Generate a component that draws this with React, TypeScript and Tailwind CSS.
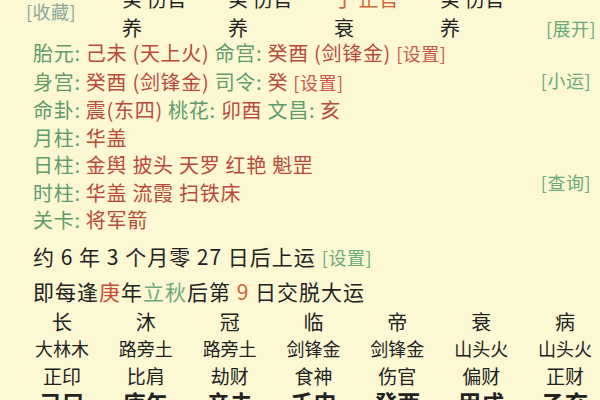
const label = "text-[#5e9c6c]";
const value = "text-[#b84a3c]";

const topCols = [
  { gan: "癸", shen: "伤官", state: "养", hot: false },
  { gan: "癸", shen: "伤官", state: "养", hot: false },
  { gan: "丁", shen: "正官", state: "衰", hot: true },
  { gan: "癸", shen: "伤官", state: "养", hot: false },
];

const dayun = [
  { state: "长", nayin: "大林木", shen: "正印", gz: "己巳" },
  { state: "沐", nayin: "路旁土", shen: "比肩", gz: "庚午" },
  { state: "冠", nayin: "路旁土", shen: "劫财", gz: "辛未" },
  { state: "临", nayin: "剑锋金", shen: "食神", gz: "壬申" },
  { state: "帝", nayin: "剑锋金", shen: "伤官", gz: "癸酉" },
  { state: "衰", nayin: "山头火", shen: "偏财", gz: "甲戌" },
  { state: "病", nayin: "山头火", shen: "正财", gz: "乙亥" },
];

function Tag({ children, red }: { children: React.ReactNode; red?: boolean }) {
  return (
    <span
      className={`whitespace-nowrap text-[18px] tracking-[0.5px] ${red ? "text-[#c9574c]" : "text-[#6aa97a]"}`}
    >
      [{children}]
    </span>
  );
}

export default function App() {
  return (
    <div
      className="w-[600px] h-[400px] overflow-hidden bg-[#fcf8d4] text-[#222]"
      style={{ fontFamily: '"Noto Sans CJK SC", "Noto Sans", sans-serif' }}
    >
      {/* 四柱尾部 */}
      <div className="mt-[-16px] grid grid-cols-[122px_106px_106px_106px_106px_1fr] grid-rows-[29px_29px] text-[20px] leading-[29px]">
        <div className="row-span-2 self-center pl-[26px] pb-[4px]">
          <span className="whitespace-nowrap text-[18px] tracking-[0.5px] text-[#8aa89c]">[收藏]</span>
        </div>
        {topCols.map((c, i) => (
          <div key={"g" + i} className={c.hot ? "text-[#d0663c]" : ""}>
            {c.gan} {c.shen}
          </div>
        ))}
        <div />
        {topCols.map((c, i) => (
          <div key={"s" + i}>{c.state}</div>
        ))}
        <div className="whitespace-nowrap text-right pr-[9px]">
          <Tag>展开</Tag>
        </div>
      </div>

      {/* 信息 */}
      <div className="mt-[-3px] flex justify-between">
        <div className="pl-[33px] text-[20px] leading-[27.5px] tracking-[0.7px] whitespace-nowrap">
          <div>
            <span className={label}>胎元: </span>
            <span className={value}>己未 (天上火) </span>
            <span className={label}>命宫: </span>
            <span className={value}>癸酉 (剑锋金) </span>
            <Tag red>设置</Tag>
          </div>
          <div>
            <span className={label}>身宫: </span>
            <span className={value}>癸酉 (剑锋金) </span>
            <span className={label}>司令: </span>
            <span className={value}>癸 </span>
            <Tag red>设置</Tag>
          </div>
          <div>
            <span className={label}>命卦: </span>
            <span className={value}>震(东四) </span>
            <span className={label}>桃花: </span>
            <span className={value}>卯酉 </span>
            <span className={label}>文昌: </span>
            <span className={value}>亥</span>
          </div>
          <div>
            <span className={label}>月柱: </span>
            <span className={value}>华盖</span>
          </div>
          <div>
            <span className={label}>日柱: </span>
            <span className={value}>金舆 披头 天罗 红艳 魁罡</span>
          </div>
          <div>
            <span className={label}>时柱: </span>
            <span className={value}>华盖 流霞 扫铁床</span>
          </div>
          <div>
            <span className={label}>关卡: </span>
            <span className={value}>将军箭</span>
          </div>
        </div>
        <div className="flex flex-col items-end pr-[9px] leading-[27.5px]">
          <div className="mt-[27.5px]">
            <Tag>小运</Tag>
          </div>
          <div className="mt-[74px]">
            <Tag>查询</Tag>
          </div>
        </div>
      </div>

      {/* 起运 */}
      <div className="mt-[5px] pl-[33px] text-[21px] leading-[34px] tracking-[1px] whitespace-nowrap">
        <div>
          约 6 年 3 个月零 27 日后上运
          <span className="ml-[6px]">
            <Tag>设置</Tag>
          </span>
        </div>
        <div>
          即每逢<span className="text-[#c84b38]">庚</span>年
          <span className="text-[#6aaa7a]">立秋</span>后第
          <span className="text-[#d0663c]"> 9 </span>日交脱大运
        </div>
      </div>

      {/* 大运 */}
      <div className="ml-[20px] grid w-[587px] grid-cols-7 text-center">
        {dayun.map((d, i) => (
          <div key={i} className="flex flex-col">
            <div className="h-[27px] text-[20px] leading-[27px]">{d.state}</div>
            <div className="h-[27px] text-[18px] leading-[27px]">{d.nayin}</div>
            <div className="h-[27px] text-[19px] leading-[27px]">{d.shen}</div>
            <div className="h-[27px] text-[23px] font-bold leading-[27px]">{d.gz}</div>
          </div>
        ))}
      </div>
    </div>
  );
}
